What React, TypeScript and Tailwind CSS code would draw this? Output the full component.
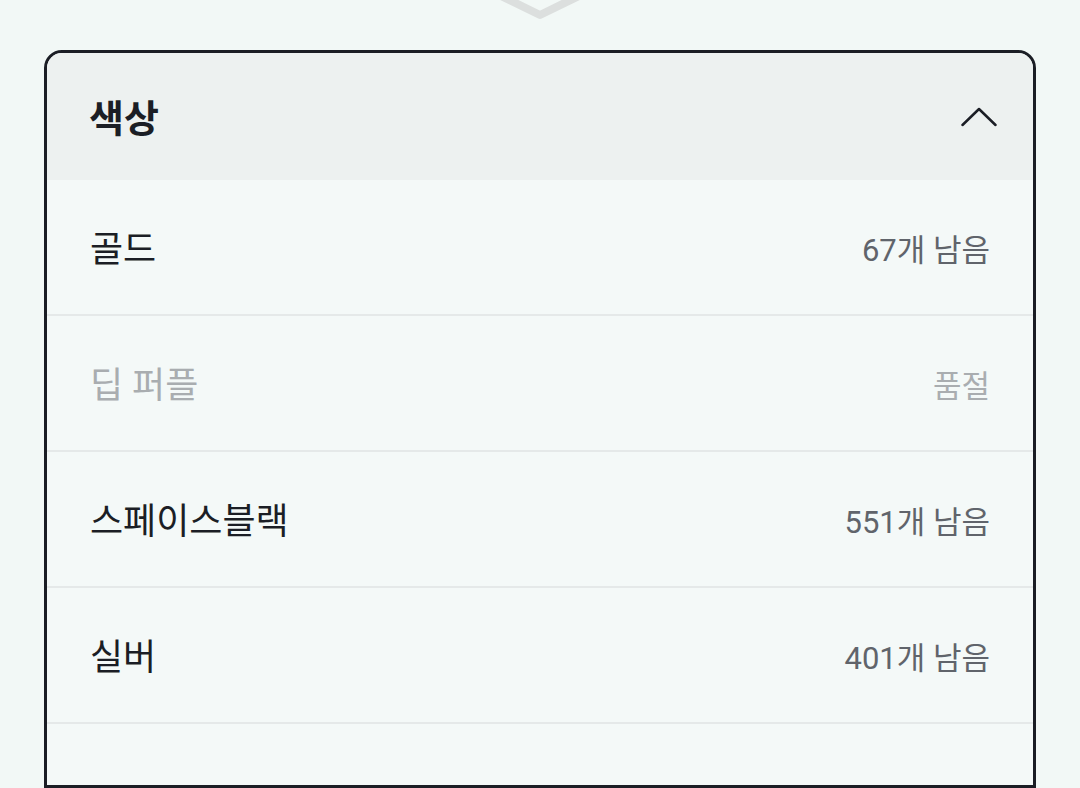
const rows = [
  { name: "골드", stock: "67개 남음", soldOut: false },
  { name: "딥 퍼플", stock: "품절", soldOut: true },
  { name: "스페이스블랙", stock: "551개 남음", soldOut: false },
  { name: "실버", stock: "401개 남음", soldOut: false },
  { name: "", stock: "", soldOut: false },
];

export default function App() {
  return (
    <div
      className="w-[1080px] h-[788px] overflow-hidden bg-[#f2f8f6] flex flex-col"
      style={{ fontFamily: 'Roboto, "Noto Sans CJK KR", sans-serif' }}
    >
      <div className="h-[50px] shrink-0 flex justify-center">
        <svg width="90" height="24" viewBox="0 0 90 24">
          <path d="M2 -6 L45 15 L88 -6" fill="none" stroke="#dcdfde" strokeWidth="8" strokeLinejoin="round" strokeLinecap="round" />
        </svg>
      </div>

      <div className="mx-[44px] border-[3px] border-[#1b1e25] rounded-t-[18px] overflow-hidden bg-[#f4f9f8] flex-1">
        <div className="h-[127px] bg-[#edf1f0] flex items-center justify-between pl-[42px] pr-[36px] pt-[5px]">
          <span className="text-[38px] font-bold text-[#1b1e25] leading-none">색상</span>
          <svg width="36" height="20" viewBox="0 0 36 20" className="-mt-[5px]">
            <path d="M1.5 18 L18 2 L34.5 18" fill="none" stroke="#1b1e25" strokeWidth="2.5" strokeLinecap="round" strokeLinejoin="round" />
          </svg>
        </div>
        {rows.map((r, i) => (
          <div
            key={i}
            className="h-[136px] border-b-2 border-[#e5e9e9] flex items-center justify-between px-[43px] pt-[6px]"
          >
            <span className={`text-[36px] leading-none ${r.soldOut ? "text-[#a9adb0]" : "text-[#1b1e25]"}`}>
              {r.name}
            </span>
            <span className={`text-[31px] leading-none ${r.soldOut ? "text-[#a9adb0]" : "text-[#60646b]"}`}>
              {r.stock}
            </span>
          </div>
        ))}
      </div>
    </div>
  );
}
